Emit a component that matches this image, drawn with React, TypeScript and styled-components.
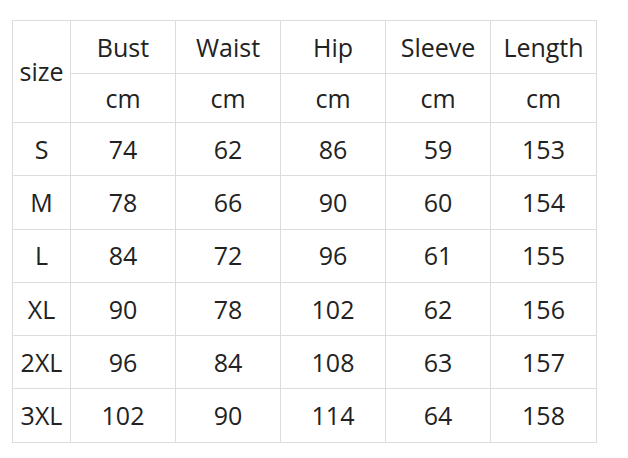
import styled, { createGlobalStyle } from "styled-components";

const GlobalStyle = createGlobalStyle`
  body {
    margin: 0;
    background: #fff;
    font-family: "Open Sans", "Liberation Sans", sans-serif;
  }
`;

const Page = styled.div`
  padding: 20px 0 0 12px;
`;

const SizeTable = styled.table`
  border-collapse: collapse;
  table-layout: fixed;
  width: 584px;
  color: #222;
  font-size: 25px;
`;

const Cell = styled.td<{ $h?: number }>`
  border: 1px solid #dcdcdc;
  text-align: center;
  vertical-align: middle;
  padding: 0;
  height: ${(p) => p.$h ?? 52.3}px;
  line-height: 1;
`;

const columns = ["Bust", "Waist", "Hip", "Sleeve", "Length"];
const widths = [58, 105, 105, 105, 105, 106];

const rows: [string, number, number, number, number, number][] = [
  ["S", 74, 62, 86, 59, 153],
  ["M", 78, 66, 90, 60, 154],
  ["L", 84, 72, 96, 61, 155],
  ["XL", 90, 78, 102, 62, 156],
  ["2XL", 96, 84, 108, 63, 157],
  ["3XL", 102, 90, 114, 64, 158],
];

export default function App() {
  return (
    <Page>
      <GlobalStyle />
      <SizeTable>
        <colgroup>
          {widths.map((w, i) => (
            <col key={i} style={{ width: w }} />
          ))}
        </colgroup>
        <tbody>
          <tr>
            <Cell rowSpan={2}>size</Cell>
            {columns.map((c) => (
              <Cell key={c} $h={52}>{c}</Cell>
            ))}
          </tr>
          <tr>
            {columns.map((c) => (
              <Cell key={c} $h={48}>cm</Cell>
            ))}
          </tr>
          {rows.map((r) => (
            <tr key={r[0]}>
              {r.map((v, i) => (
                <Cell key={i}>{v}</Cell>
              ))}
            </tr>
          ))}
        </tbody>
      </SizeTable>
    </Page>
  );
}
